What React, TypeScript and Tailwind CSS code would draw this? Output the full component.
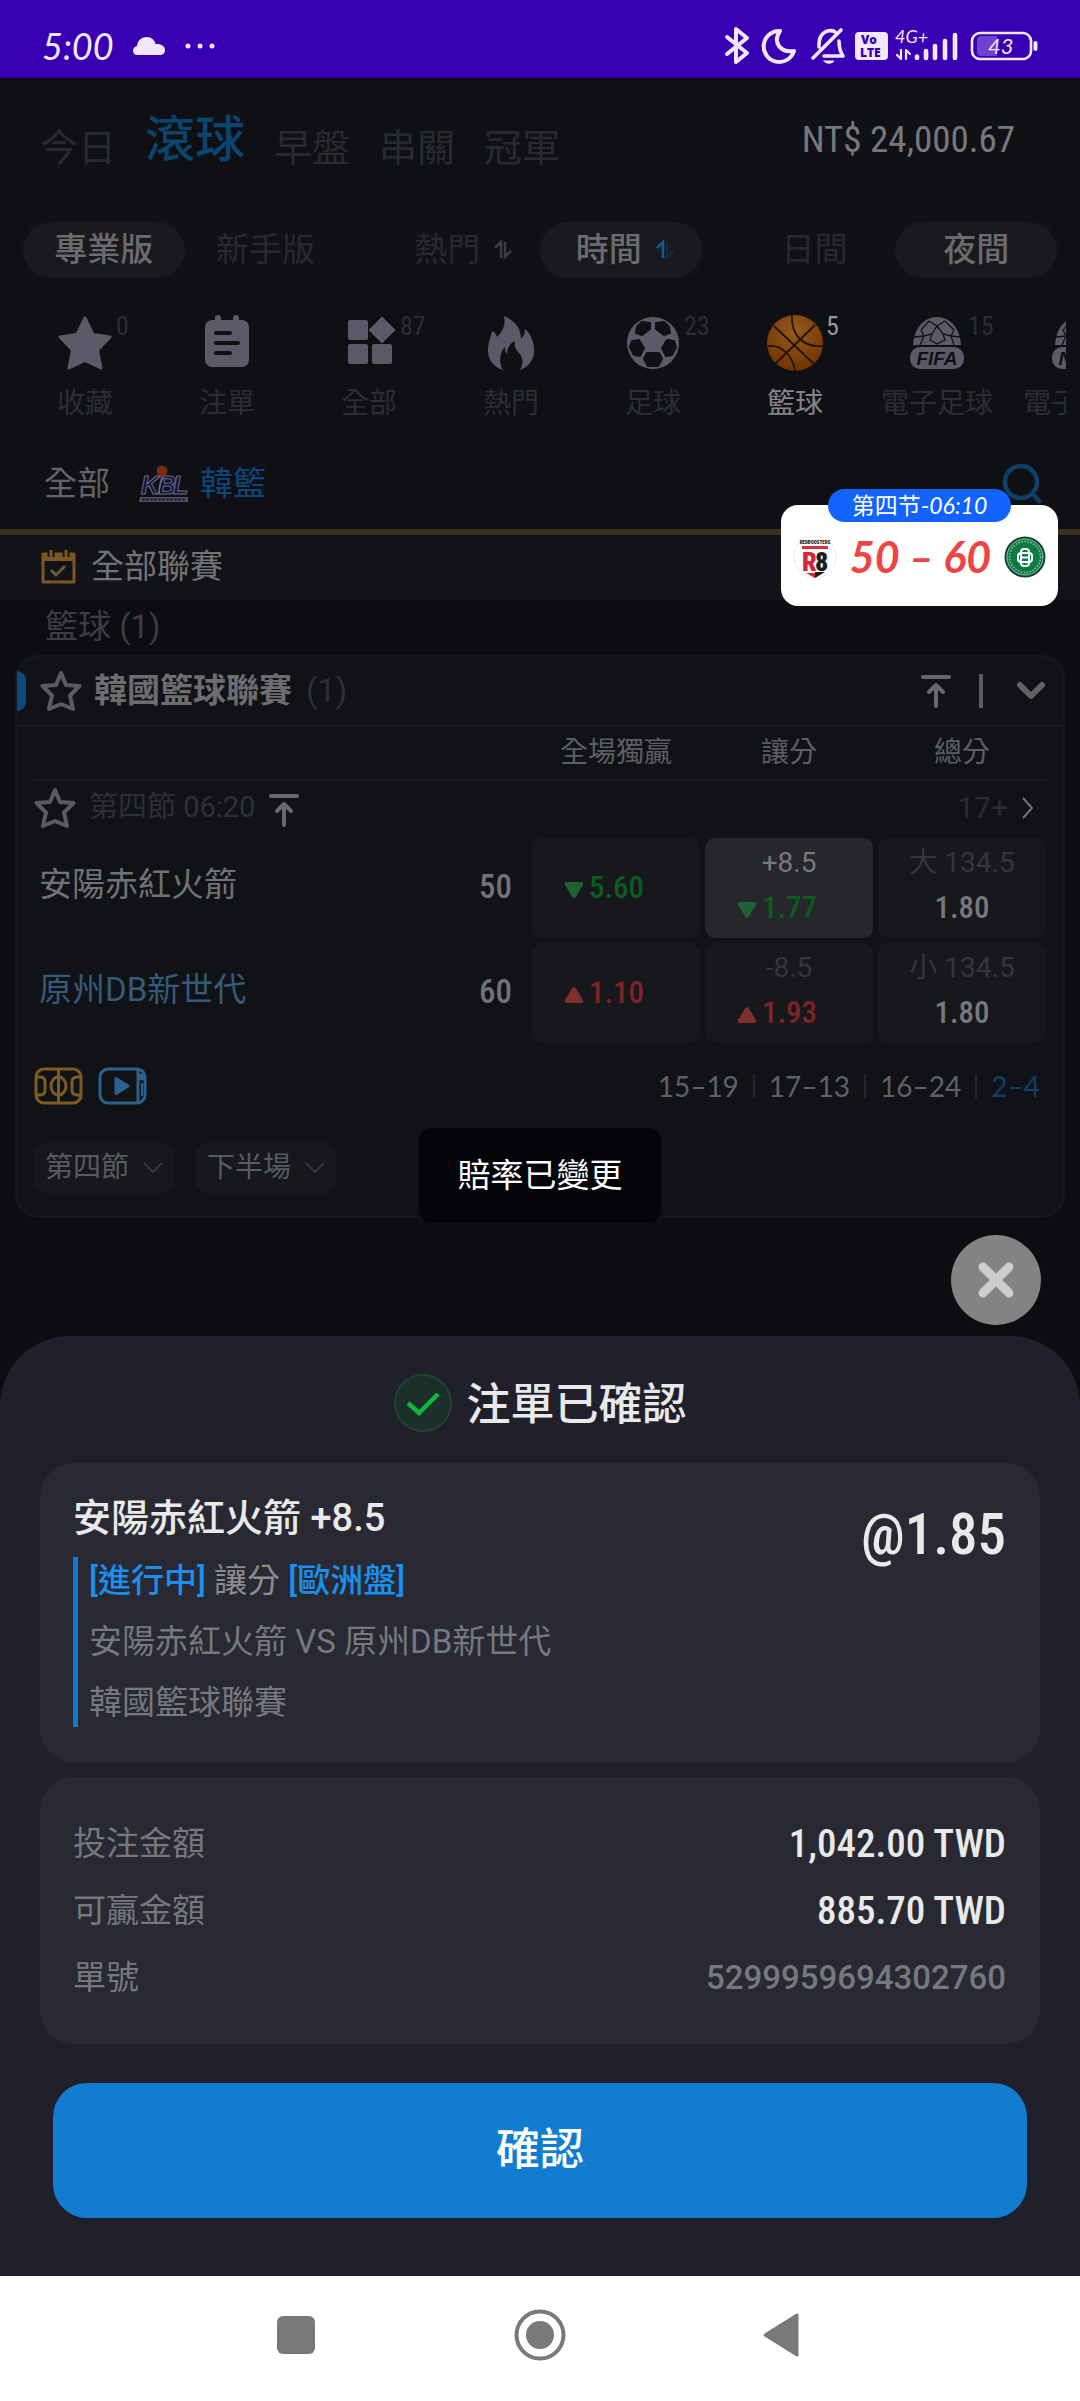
import React from "react";

const cjk = "font-['Roboto','Noto_Sans_CJK_TC',sans-serif]";
const narrow = "font-['Roboto_Condensed','Liberation_Sans_Narrow','Roboto',sans-serif]";
const hand = "font-['Lato','Noto_Sans_CJK_SC',sans-serif]";

function StatusBar() {
  return (
    <header className={`flex h-[78px] items-center justify-between bg-[#3900b3] pt-[14px] pl-[42px] pr-[42px] text-[#f1e8ff] ${hand}`}>
      <div className="flex items-center gap-[18px]">
        <span className="text-[36px] leading-[36px] italic">5:00</span>
        <svg width="34" height="20" viewBox="0 0 34 20" fill="currentColor" aria-hidden="true">
          <path d="M6 19C2.500 19 1 17 1 14.500C1 12 3 10.500 5 10C5.500 4.500 9.500 1 14.500 1C19.500 1 22.500 4 23.500 8C29 7.500 33 10 33 14C33 17 31 19 28 19Z" />
        </svg>
        <svg width="32" height="8" viewBox="0 0 32 8" fill="currentColor" aria-hidden="true">
          <circle cx="4" cy="4" r="2.500" /><circle cx="16" cy="4" r="2.500" /><circle cx="28" cy="4" r="2.500" />
        </svg>
      </div>
      <svg width="314" height="48" viewBox="724 21 314 48" fill="none" stroke="currentColor" strokeWidth="4" strokeLinecap="round" strokeLinejoin="round" role="img" aria-label="43%">
        <path d="M727 36L747 52L736 61V28L747 37L727 53" />
        <path d="M780 30A15.500 15.500 0 1 0 794 50C781 52 772 42 780 30Z" />
        <path d="M813 57L841 29M819 46V43C819 29 832 28 835 31M839 40C839 48 841 52 843 55H824" strokeWidth="3.600" />
        <path d="M824 60H834C832 63 826 63 824 60Z" fill="currentColor" strokeWidth="1" />
        <rect x="855" y="31" width="33" height="28" rx="4" fill="currentColor" stroke="none" />
        <g stroke="none" fill="#3900b3" fontFamily="Open Sans" fontWeight="800" fontSize="12">
          <text x="861" y="43">Vo</text>
          <text x="860" y="56">LTE</text>
        </g>
        <text x="895" y="42" stroke="none" fill="currentColor" fontFamily="Lato" fontStyle="italic" fontSize="18">4G+</text>
        <path d="M901 49V58L897 54M906 58V49L910 53" strokeWidth="2.200" />
        <path d="M917 57V55.500M926 57V50M935 57V45M945 57V40M955 57V34" strokeWidth="4.600" />
        <rect x="972" y="32" width="59" height="26" rx="8" strokeWidth="2.600" />
        <path d="M980 35H997V55H980A4 4 0 0 1 977 51V39A4 4 0 0 1 980 35Z" fill="#6c42cf" stroke="none" />
        <path d="M1035.500 42V48" strokeWidth="4" />
        <text x="988" y="53" stroke="none" fill="currentColor" fontFamily="Lato" fontStyle="italic" fontSize="22">43</text>
      </svg>
    </header>
  );
}

function TopNav() {
  const tab = "text-[38px] leading-[44px] text-[#292a2d]";
  return (
    <div className="flex items-center justify-between pt-[27px] pb-[40px] pl-[40px] pr-[30px]">
      <nav className="flex items-end gap-[29px]">
        <button className={tab}>今日</button>
        <button className="text-[50px] leading-[60px] font-medium text-[#0b446e]">滾球</button>
        <button className={tab}>早盤</button>
        <button className={tab}>串關</button>
        <button className={tab}>冠軍</button>
      </nav>
      <div className={`rounded-full bg-[#101114] px-[35px] text-[37px] leading-[70px] text-[#77787b] ${narrow}`}>NT$ 24,000.67</div>
    </div>
  );
}

function SortIcon({ active }: { active?: boolean }) {
  return (
    <svg width="20" height="20" viewBox="0 0 20 20" fill="none" strokeWidth="2.500" aria-hidden="true">
      <path d="M2 8L8 2V18" stroke={active ? "#0f5c96" : "#3c3d40"} />
      <path d="M12 2V17L18 11" stroke={active ? "#16354c" : "#3c3d40"} strokeWidth={active ? "1.500" : "2.500"} />
    </svg>
  );
}

function Segments() {
  const groups = [
    [{ t: "專業版", on: true, s: false }, { t: "新手版", on: false, s: false }],
    [{ t: "熱門", on: false, s: true }, { t: "時間", on: true, s: true }],
    [{ t: "日間", on: false, s: false }, { t: "夜間", on: true, s: false }],
  ];
  return (
    <div className="grid grid-cols-3 gap-[26px] px-[20px]">
      {groups.map((g, i) => (
        <div key={i} className="grid grid-cols-2 rounded-full bg-[#101114] px-[3px] py-[7px]">
          {g.map((b) => (
            <button
              key={b.t}
              className={`flex items-center justify-center gap-[13px] rounded-full text-[33px] leading-[56px] ${b.s ? "pl-[9px]" : ""} ${b.on ? "bg-[#1a1a1e] font-medium text-[#6b6b6e]" : "text-[#28292c]"}`}
            >
              {b.t}
              {b.s && <SortIcon active={b.on} />}
            </button>
          ))}
        </div>
      ))}
    </div>
  );
}

const G = "#5c5a68";
const D = "#101114";

function Dome({ label }: { label: string }) {
  return (
    <>
      <path d="M4 30C5 13 15 2 28 2C41 2 51 13 52 30Z" fill={G} />
      <path d="M20 6L28 11L36 6M20 6L12 15L15 21L23 19L28 11L34 19L42 21L45 15L36 6M15 21L11 30M23 19L21 25L28 29L36 25L34 19M42 21L45 30M5 22L15 21M51 22L42 21" fill="none" stroke={D} strokeWidth="1.300" />
      <rect x="1" y="32" width="54" height="22" rx="10" fill={G} />
      <text x="28" y="50" textAnchor="middle" fill={D} fontFamily="Liberation Sans" fontWeight="700" fontStyle="italic" fontSize="19">{label}</text>
    </>
  );
}

const catIcon: Record<string, React.ReactNode> = {
  star: <path d="M28 3L36 19.500L53 22L40.500 35L44 53L28 45.500L12 53L15.500 35L3 22L20 19.500Z" fill={G} stroke={G} strokeWidth="3" strokeLinejoin="round" />,
  note: (
    <>
      <rect x="6" y="5" width="44" height="47" rx="7" fill={G} />
      <path d="M19 3V8M37 3V8" stroke={G} strokeWidth="6" strokeLinecap="round" />
      <path d="M17 18H31M17 28H39M17 38H31" stroke={D} strokeWidth="4" strokeLinecap="round" />
    </>
  ),
  grid: (
    <g fill={G}>
      <rect x="7" y="5" width="20" height="20" rx="2" />
      <rect x="7" y="29" width="20" height="20" rx="2" />
      <rect x="31" y="29" width="20" height="20" rx="2" />
      <path d="M41 2L54 15L41 28L28 15Z" stroke={G} strokeWidth="1" strokeLinejoin="round" />
    </g>
  ),
  fire: <path d="M21 1C33 6 38 14 38 24C40 22 42 19 42 14C48 19 52 29 51 38C50 46 45 52 37 55C41 48 40 41 35 37C32 34 31 30 32 26C27 28 24 33 24 39C22 37 22 35 22 32C17 37 15 46 20 55C11 52 5 45 5 36C5 27 8 22 9 16C12 17 13 19 14 22C20 16 23 9 21 1Z" fill={G} />,
  soccer: (
    <>
      <circle cx="28" cy="28" r="26" fill={G} />
      <g fill={D} stroke={D} strokeWidth="2" strokeLinejoin="round">
        <path d="M12 12L17 7L25 8V14L17 20L11 18Z" />
        <path d="M44 12L39 7L31 8V14L39 20L45 18Z" />
        <path d="M7 26L14 25L19 33L15 41L9 40L5 32Z" />
        <path d="M49 26L42 25L37 33L41 41L47 40L51 32Z" />
        <path d="M22 38H34L37 44L33 51L23 51L19 44Z" />
      </g>
    </>
  ),
  basket: (
    <>
      <circle cx="28" cy="28" r="28" fill="url(#ball)" />
      <g fill="none" stroke="#1e1408" strokeWidth="1.800">
        <path d="M7 11L47 49M48 10L9 48M25 0C24 20 36 33 56 31M1 31C14 30 26 40 28 56" />
      </g>
      <defs>
        <radialGradient id="ball" cx="0.500" cy="0.300" r="0.700">
          <stop offset="0" stopColor="#955a1b" />
          <stop offset="1" stopColor="#723300" />
        </radialGradient>
      </defs>
    </>
  ),
  fifa: <Dome label="FIFA" />,
  nba: <Dome label="NBA" />,
};

function Categories() {
  const items = [
    { i: "star", t: "收藏", n: "0" },
    { i: "note", t: "注單", n: "" },
    { i: "grid", t: "全部", n: "87" },
    { i: "fire", t: "熱門", n: "" },
    { i: "soccer", t: "足球", n: "23" },
    { i: "basket", t: "籃球", n: "5", on: true },
    { i: "fifa", t: "電子足球", n: "15" },
    { i: "nba", t: "電子籃球", n: "" },
  ];
  return (
    <div className="mx-[14px] flex overflow-hidden pt-[30px] pb-[20px]">
      {items.map((c) => (
        <button key={c.i} className="flex w-[142px] shrink-0 flex-col items-center gap-[18px]">
          <span className="relative">
            <svg width="56" height="56" viewBox="0 0 56 56" aria-hidden="true">{catIcon[c.i]}</svg>
            {c.n && <span className={`absolute -top-[3px] left-full pl-[3px] text-[26px] leading-[28px] ${narrow} ${c.on ? "text-[#98989b]" : "text-[#2c2d30]"}`}>{c.n}</span>}
          </span>
          <span className={`text-[28px] leading-[30px] whitespace-nowrap ${c.on ? "text-[#858588]" : "text-[#2c2d30]"}`}>{c.t}</span>
        </button>
      ))}
    </div>
  );
}

function ScoreFloat() {
  return (
    <div className={`absolute top-full right-[22px] z-10 -mt-[24px] flex h-[101px] w-[277px] flex-col rounded-[17px] bg-white px-[12px] ${hand}`}>
      <div className="mx-auto -mt-[16px] rounded-full bg-[#1363ff] px-[24px] text-[23px] leading-[33px] whitespace-nowrap text-white">
        第四节-<span className="italic">06:10</span>
      </div>
      <div className="mt-[13px] flex items-center justify-between">
        <svg width="44" height="44" viewBox="0 0 44 44" aria-hidden="true">
          <circle cx="22" cy="22" r="21" fill="#fff" stroke="#ececec" />
          <text x="22" y="9" textAnchor="middle" fontFamily="Roboto Condensed" fontWeight="900" fontSize="5" fill="#222">REDBOOSTERS</text>
          <path d="M9 11H35V14H9Z" fill="#e02a3c" />
          <text x="9" y="36" fontFamily="Roboto Condensed" fontWeight="900" fontSize="26" fill="#d9233a">R</text>
          <text x="22" y="36" fontFamily="Roboto Condensed" fontWeight="900" fontSize="26" fill="#1c1c1e">8</text>
          <path d="M13 38L22 43V38Z" fill="#d9233a" />
          <path d="M22 43L32 37H22Z" fill="#1c1c1e" />
        </svg>
        <span className="text-[43px] leading-[44px] font-bold whitespace-pre text-[#ef4444] italic">50 – 60</span>
        <svg width="42" height="42" viewBox="0 0 42 42" aria-hidden="true">
          <circle cx="21" cy="21" r="20.500" fill="#173f3a" />
          <circle cx="21" cy="21" r="18" fill="#0c7a43" stroke="#8fc9a8" strokeWidth="1" />
          <circle cx="21" cy="21" r="15.500" fill="none" stroke="#8cc8a6" strokeWidth="1.500" strokeDasharray="1.500 1.500" />
          <g fill="none" stroke="#fff" strokeWidth="2">
            <rect x="17" y="13" width="8" height="17" rx="3" />
            <rect x="14" y="17" width="14" height="9" rx="3" />
            <path d="M17 21.500H25" />
          </g>
        </svg>
      </div>
    </div>
  );
}

function LeagueTabs() {
  return (
    <div className="relative flex h-[96px] items-center border-b-[6px] border-[#3b2f1d] pr-[38px] pl-[44px] text-[33px]">
      <button className="text-[#636467]">全部</button>
      <button className="ml-[29px] flex items-center gap-[10px] text-[#0b4778]">
        <svg width="51" height="38" viewBox="0 0 51 38" aria-hidden="true">
          <g fontFamily="Liberation Sans" fontWeight="700" fontStyle="italic" fontSize="25" fill="#12113f" stroke="#6e6c84" strokeWidth="1">
            <text x="2" y="29">K</text>
            <text x="19" y="29">B</text>
            <text x="34" y="29">L</text>
          </g>
          <circle cx="23" cy="6" r="5.500" fill="#7c2a14" />
          <path d="M20 29C20 20 22 15 25 12" fill="none" stroke="#6e6c84" strokeWidth="1.500" />
          <path d="M1 32H49V37H0Z" fill="#504e62" />
          <path d="M3 34.500H47" stroke="#1c1b33" strokeWidth="2" strokeDasharray="3 1" />
        </svg>
        韓籃
      </button>
      <button aria-label="搜尋" className="ml-auto">
        <svg width="40" height="42" viewBox="0 0 40 42" fill="none" stroke="#0e3f66" strokeWidth="4.500" strokeLinecap="round">
          <circle cx="19" cy="19" r="16" /><path d="M31 31L37 38" />
        </svg>
      </button>
      <ScoreFloat />
    </div>
  );
}

function Star() {
  return (
    <svg width="42" height="42" viewBox="0 0 42 42" fill="none" stroke="#5a5b5e" strokeWidth="4" strokeLinejoin="round" aria-hidden="true">
      <path d="M21 3L26 15L39.500 16L30 25.500L33 39L21 34L9 39L12 25.500L2.500 16L16 15Z" />
    </svg>
  );
}

function ToTop() {
  return (
    <svg width="32" height="34" viewBox="0 0 32 34" fill="none" stroke="#68686b" strokeWidth="4" strokeLinecap="round" strokeLinejoin="round" aria-hidden="true">
      <path d="M3 3H29M16 32V12M9 18L16 11L23 18" />
    </svg>
  );
}

function Odds({ line, value, dir, on }: { line?: string; value: string; dir?: "up" | "down"; on?: boolean }) {
  const color = dir === "up" ? "text-[#7d2428]" : dir === "down" ? "text-[#0c5b20]" : "text-[#77787b]";
  return (
    <button className={`flex h-[100px] flex-col items-center justify-center rounded-[10px] ${on ? "bg-[#26272b]" : "bg-[#17181b]"}`}>
      {line && <span className={`text-[28px] leading-[40px] ${on ? "text-[#77787b]" : "text-[#35363a]"}`}>{line}</span>}
      <span className={`flex items-center gap-[5px] text-[31px] leading-[50px] font-medium ${narrow} ${color} ${dir ? "pr-[24px]" : ""}`}>
        {dir && (
          <svg width="20" height="18" viewBox="0 0 20 18" className="mt-[4px]" fill={dir === "up" ? "#80302c" : "#1f6132"} aria-hidden="true">
            {dir === "up" ? <path d="M8 2.500Q10 0 12 2.500L19 14Q20 17 17 17H3Q0 17 1 14Z" /> : <path d="M8 15.500Q10 18 12 15.500L19 4Q20 1 17 1H3Q0 1 1 4Z" />}
          </svg>
        )}
        {value}
      </span>
    </button>
  );
}

function Team({ name, score, leading }: { name: string; score: string; leading?: boolean }) {
  return (
    <div className="flex items-center justify-between pr-[15px] pb-[7px] pl-[5px] text-[#717275]">
      <span className={leading ? "text-[#345b78]" : ""}>{name}</span>
      <span className={`pt-[4px] font-medium ${narrow}`}>{score}</span>
    </div>
  );
}

function Chip({ t }: { t: string }) {
  return (
    <button className="flex items-center gap-[14px] rounded-[10px] bg-[#17181b] px-[11px] text-[28px] leading-[50px] text-[#5a5b5e]">
      {t}
      <svg width="20" height="12" viewBox="0 0 20 12" fill="none" stroke="#3f4044" strokeWidth="1.500" aria-hidden="true"><path d="M1 1L10 10L19 1" /></svg>
    </button>
  );
}

const cols = "grid grid-cols-[1fr_168px_168px_168px] gap-x-[5px]";

function MatchCard() {
  return (
    <section className="relative mx-[15px] rounded-[24px] border-2 border-[#16171a] bg-[#111215]">
      <div className="flex h-[70px] items-center border-b-2 border-[#1a1b1e] pr-[17px]">
        <span className="h-[40px] w-[9px] rounded-r-[9px] bg-[#0b4a7a]" />
        <button className="ml-[14px]" aria-label="收藏聯賽"><Star /></button>
        <h2 className="ml-[12px] text-[33px] font-bold text-[#6d6d70]">韓國籃球聯賽</h2>
        <span className="ml-[14px] text-[33px] text-[#2e2f32]">(1)</span>
        <button className="ml-auto" aria-label="置頂"><ToTop /></button>
        <span className="mx-[27px] h-[34px] w-[4px] bg-[#5d5d60]" />
        <button aria-label="收合" className="ml-[6px]">
          <svg width="30" height="20" viewBox="0 0 30 20" fill="none" stroke="#626265" strokeWidth="6" strokeLinecap="round" strokeLinejoin="round"><path d="M4 4L15 15L26 4" /></svg>
        </button>
      </div>
      <div className="px-[17px]">
        <div className={`${cols} border-b-2 border-[#1a1b1e] text-center text-[28px] leading-[52px] text-[#5d5e61]`}>
          <span />
          <span>全場獨贏</span><span>讓分</span><span>總分</span>
        </div>
        <div className="flex h-[57px] items-center pb-[4px]">
          <button aria-label="收藏賽事"><Star /></button>
          <span className="ml-[13px] text-[29px] text-[#2e2f32]">第四節 06:20</span>
          <button className="mt-[5px] ml-[13px]" aria-label="賽事置頂"><ToTop /></button>
          <button className="ml-auto flex items-center gap-[13px] pr-[12px] text-[30px] text-[#2b2c2f]">
            17+
            <svg width="13" height="22" viewBox="0 0 13 22" fill="none" stroke="#707073" strokeWidth="2" aria-hidden="true"><path d="M2 1L11 11L2 21" /></svg>
          </button>
        </div>
        <div className={`${cols} items-center gap-y-[5px] text-[33px]`}>
          <Team name="安陽赤紅火箭" score="50" />
          <Odds value="5.60" dir="down" />
          <Odds line="+8.5" value="1.77" dir="down" on />
          <Odds line="大 134.5" value="1.80" />
          <Team name="原州DB新世代" score="60" leading />
          <Odds value="1.10" dir="up" />
          <Odds line="-8.5" value="1.93" dir="up" />
          <Odds line="小 134.5" value="1.80" />
        </div>
        <div className="flex h-[86px] items-center gap-[15px]">
          <button aria-label="動畫">
            <svg width="49" height="38" viewBox="0 0 49 38" fill="none" stroke="#7d5c22" strokeWidth="3">
              <rect x="2" y="2" width="45" height="34" rx="8" />
              <path d="M24.500 2V36M2 10H6Q11 10 11 15V23Q11 28 6 28H2M47 10H43Q38 10 38 15V23Q38 28 43 28H47" />
              <ellipse cx="24.500" cy="19" rx="7.500" ry="9" />
            </svg>
          </button>
          <button aria-label="直播">
            <svg width="49" height="38" viewBox="0 0 49 38" fill="none" stroke="#2b618d" strokeWidth="3">
              <rect x="2" y="2" width="45" height="34" rx="8" />
              <path d="M40 3V35" /><circle cx="43" cy="10" r="2" fill="#2b618d" /><path d="M44 16V29" strokeWidth="2" />
              <path d="M18 11.500V26.500L30 19Z" fill="#2b618d" strokeLinejoin="round" />
            </svg>
          </button>
          <div className={`ml-auto flex items-center pr-[6px] text-[28px] text-[#5f6063] ${hand}`}>
            <span>15–19</span>
            <span className="mx-[14px] h-[24px] w-[2px] bg-[#26272a]" />
            <span>17–13</span>
            <span className="mx-[14px] h-[24px] w-[2px] bg-[#26272a]" />
            <span>16–24</span>
            <span className="mx-[14px] h-[24px] w-[2px] bg-[#26272a]" />
            <span className="text-[#0c4069]">2–4</span>
          </div>
        </div>
        <div className="flex gap-[22px] pt-[14px] pb-[23px]">
          <Chip t="第四節" />
          <Chip t="下半場" />
        </div>
      </div>
      <div role="status" className="absolute -bottom-[7px] left-1/2 -translate-x-1/2 rounded-[14px] bg-[#040508] px-[39px] text-[33px] leading-[95px] whitespace-nowrap text-white">賠率已變更</div>
    </section>
  );
}

function BetSheet() {
  return (
    <section role="dialog" aria-labelledby="sheet-title" className="mt-[11px] rounded-t-[70px] bg-[#1f202a] px-[40px] pt-[38px] pb-[58px]">
      <div className="flex items-center justify-center gap-[15px]">
        <svg width="58" height="58" viewBox="0 0 58 58" fill="none" aria-hidden="true">
          <circle cx="29" cy="29" r="28" fill="#1c2f2b" stroke="#1f4436" strokeWidth="2" />
          <path d="M14 29L25 39L44 20" stroke="#0fb83a" strokeWidth="4.500" />
        </svg>
        <h1 id="sheet-title" className="pt-[4px] text-[44px] leading-[54px] font-medium text-[#e9e9ea]">注單已確認</h1>
      </div>
      <div className="mt-[31px] flex justify-between rounded-[34px] bg-[#282932] pt-[31px] pr-[34px] pb-[36px] pl-[33px]">
        <div>
          <h2 className="text-[38px] leading-[48px] font-medium text-[#e9e9ea]">安陽赤紅火箭 +8.5</h2>
          <div className="mt-[15px] flex flex-col gap-[13px] border-l-[5px] border-[#127bcd] pl-[11px] text-[33px] leading-[48px] text-[#77787d]">
            <p><span className="font-medium text-[#1890f0]">[進行中]</span> <span className="text-[#8b8c90]">讓分</span> <span className="font-medium text-[#1890f0]">[歐洲盤]</span></p>
            <p>安陽赤紅火箭 VS 原州DB新世代</p>
            <p>韓國籃球聯賽</p>
          </div>
        </div>
        <span className={`mt-[6px] text-[57px] leading-[70px] font-medium text-[#e9e9ea] ${narrow}`}>@1.85</span>
      </div>
      <dl className="mt-[14px] grid grid-cols-[auto_1fr] rounded-[34px] bg-[#282932] pt-[33px] pr-[34px] pb-[33px] pl-[33px] text-[33px] leading-[67px] text-[#77787d]">
        <dt>投注金額</dt>
        <dd className={`pt-[2px] text-right text-[39px] leading-[65px] font-medium text-[#e9e9ea] ${narrow}`}>1,042.00 TWD</dd>
        <dt>可贏金額</dt>
        <dd className={`pt-[2px] text-right text-[39px] leading-[65px] font-medium text-[#e9e9ea] ${narrow}`}>885.70 TWD</dd>
        <dt>單號</dt>
        <dd className="text-right font-medium">5299959694302760</dd>
      </dl>
      <button className="mx-[13px] mt-[39px] block w-[calc(100%-26px)] rounded-[34px] bg-[#127dd0] text-[44px] leading-[135px] font-medium text-white">確認</button>
    </section>
  );
}

function SystemNav() {
  return (
    <nav className="flex min-h-[120px] grow items-center justify-center gap-[192px] bg-white pb-[7px]">
      <button aria-label="最近"><svg width="52" height="52" viewBox="0 0 52 52" fill="#797979"><rect x="7" y="7" width="38" height="38" rx="6" /></svg></button>
      <button aria-label="主畫面"><svg width="52" height="52" viewBox="0 0 52 52"><circle cx="26" cy="26" r="23.500" fill="none" stroke="#797979" strokeWidth="4" /><circle cx="26" cy="26" r="14" fill="#797979" /></svg></button>
      <button aria-label="返回"><svg width="52" height="52" viewBox="0 0 52 52" fill="#797979" stroke="#797979" strokeWidth="3" strokeLinejoin="round"><path d="M7 26L39 6V46Z" /></svg></button>
    </nav>
  );
}

export default function App() {
  return (
    <div className={`flex min-h-screen flex-col bg-[#0d0d11] ${cjk}`}>
      <StatusBar />
      <main className="flex flex-col">
        <div className="bg-[#0f1013]">
          <TopNav />
          <Segments />
          <Categories />
          <LeagueTabs />
        </div>
        <div className="flex h-[65px] items-center gap-[15px] bg-[#121316] pb-[2px] pl-[41px] text-[33px] text-[#727376]">
          <svg width="35" height="34" viewBox="0 0 35 34" fill="none" aria-hidden="true">
            <path d="M2 4H33V32H2Z" stroke="#795826" strokeWidth="3" strokeLinejoin="round" />
            <path d="M2 4H33V11H2Z" fill="#795826" />
            <path d="M10 0V7M25 0V7" stroke="#121316" strokeWidth="7" />
            <path d="M10 0V6M25 0V6" stroke="#795826" strokeWidth="3" strokeLinecap="round" />
            <path d="M10 20L15 25L24 16" stroke="#6d5a38" strokeWidth="3" />
          </svg>
          全部聯賽
        </div>
        <div className="flex h-[55px] items-center pb-[2px] pl-[45px] text-[33px] text-[#3c3d40]">籃球 (1)</div>
        <MatchCard />
        <div className="flex justify-end pt-[17px] pr-[39px]">
          <button aria-label="關閉" className="grid size-[90px] place-items-center rounded-full bg-[#838383]">
            <svg width="38" height="38" viewBox="0 0 38 38" stroke="#cdcdcd" strokeWidth="9" strokeLinecap="round"><path d="M6 6L32 32M32 6L6 32" /></svg>
          </button>
        </div>
        <BetSheet />
      </main>
      <SystemNav />
    </div>
  );
}
